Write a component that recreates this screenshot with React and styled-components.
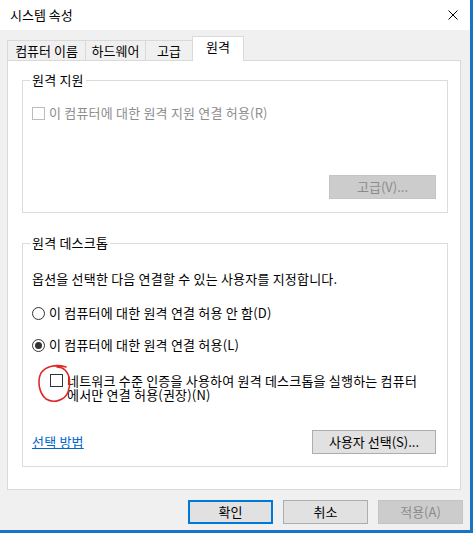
import React from "react";
import styled, { createGlobalStyle } from "styled-components";

const Global = createGlobalStyle`
  html, body { margin: 0; padding: 0; background: #f0f0f0; }
  body {
    font-family: "Noto Sans CJK KR", "Noto Sans", sans-serif;
    font-size: 13px;
    letter-spacing: 0.2px;
    color: #000;
  }
  * { box-sizing: border-box; }
`;

const Window = styled.div`
  width: 473px;
  height: 533px;
  background: #f0f0f0;
  border-right: 3px solid #1a74c6;
  border-bottom: 3px solid #1a74c6;
  display: flex;
  flex-direction: column;
`;

const TitleBar = styled.div`
  flex: none;
  height: 30px;
  background: #fff;
  display: flex;
  align-items: center;
  justify-content: space-between;
  padding: 0 12px 0 10px;
`;

const Title = styled.span`
  font-size: 13px;
  line-height: 16px;
  letter-spacing: 0;
`;

const Body = styled.div`
  flex: 1;
  display: flex;
  flex-direction: column;
  padding: 7px 9px 0 7px;
`;

const TabRow = styled.div`
  display: flex;
  align-items: flex-end;
  height: 24px;
  position: relative;
  z-index: 1;
  margin-bottom: -1px;
`;

const Tab = styled.div`
  width: ${(p) => p.$w}px;
  height: ${(p) => (p.$active ? 25 : 21)}px;
  margin-left: ${(p) => (p.$first ? 0 : -1)}px;
  background: ${(p) => (p.$active ? "#fff" : "#f0f0f0")};
  border: 1px solid #d9d9d9;
  border-bottom: ${(p) => (p.$active ? "none" : "1px solid #d9d9d9")};
  display: flex;
  justify-content: center;
  align-items: flex-start;
  padding-top: 2px;
  font-size: 13px;
  line-height: 16px;
  letter-spacing: 0;
  white-space: nowrap;
`;

const Panel = styled.div`
  flex: none;
  height: 430px;
  background: #fff;
  border: 1px solid #d9d9d9;
  padding: 11px 12px 0 14px;
  display: flex;
  flex-direction: column;
`;

const Group = styled.fieldset`
  margin: ${(p) => p.$mt || 0}px 0 0 0;
  padding: 0 11px ${(p) => p.$pb}px 7px;
  border: 1px solid #dcdcdc;
  display: flex;
  flex-direction: column;
  min-width: 0;
`;

const Legend = styled.legend`
  padding: 0 2px;
  font-size: 13px;
  line-height: 16px;
`;

const Row = styled.div`
  display: flex;
  align-items: center;
  gap: 4px;
  margin-top: ${(p) => p.$mt}px;
  padding-left: 2px;
  height: 16px;
  font-size: 13px;
  line-height: 16px;
  color: ${(p) => (p.$disabled ? "#8d8d8d" : "#000")};
  white-space: nowrap;
`;

const Desc = styled.div`
  margin-top: ${(p) => p.$mt}px;
  padding-left: 2px;
  font-size: 13px;
  line-height: 16px;
  white-space: nowrap;
`;

const Box = styled.span`
  flex: none;
  width: 13px;
  height: 13px;
  border: 1px solid ${(p) => (p.$disabled ? "#bcbcbc" : "#333")};
  background: #fff;
`;

const Radio = styled.span`
  flex: none;
  width: 13px;
  height: 13px;
  border-radius: 50%;
  border: 1px solid #333;
  display: flex;
  align-items: center;
  justify-content: center;
  &::after {
    content: "";
    width: 7px;
    height: 7px;
    border-radius: 50%;
    background: ${(p) => (p.$checked ? "#333" : "transparent")};
  }
`;

const NestedOption = styled.div`
  display: flex;
  align-items: flex-start;
  gap: 4px;
  margin-top: 21px;
  padding-left: 20px;
`;

const MarkWrap = styled.span`
  position: relative;
  flex: none;
  width: 13px;
  height: 13px;
  display: flex;
`;

const Scribble = styled.svg`
  position: absolute;
  left: -14px;
  top: -10px;
  overflow: visible;
  pointer-events: none;
`;

const TwoLine = styled.div`
  font-size: 13px;
  line-height: 14px;
  white-space: nowrap;
`;

const ButtonRow = styled.div`
  display: flex;
  justify-content: ${(p) => p.$justify || "flex-end"};
  align-items: center;
  gap: 10px;
  margin-top: ${(p) => p.$mt}px;
  margin-right: ${(p) => p.$mr || 0}px;
  padding-left: ${(p) => p.$pl || 0}px;
`;

const Button = styled.button`
  width: ${(p) => p.$w}px;
  height: 24px;
  font-family: inherit;
  font-size: 13px;
  line-height: 16px;
  letter-spacing: 0;
  padding: 0;
  background: ${(p) => (p.$disabled ? "#cccccc" : "#e1e1e1")};
  color: ${(p) => (p.$disabled ? "#8b8b8b" : "#000")};
  border: ${(p) =>
    p.$primary ? "2px solid #0078d7" : p.$disabled ? "1px solid #c4c4c4" : "1px solid #adadad"};
  cursor: default;
`;

const Link = styled.a`
  color: #0066cc;
  text-decoration: underline;
  font-size: 13px;
  line-height: 16px;
`;

const CloseIcon = () => (
  <svg width="10" height="10" viewBox="0 0 10 10">
    <path d="M0.5 0.5 L9.5 9.5 M9.5 0.5 L0.5 9.5" stroke="#000" strokeWidth="1" fill="none" />
  </svg>
);

export default function App() {
  return (
    <>
      <Global />
      <Window>
        <TitleBar>
          <Title>시스템 속성</Title>
          <CloseIcon />
        </TitleBar>
        <Body>
          <TabRow>
            <Tab $w={79} $first>컴퓨터 이름</Tab>
            <Tab $w={61}>하드웨어</Tab>
            <Tab $w={48}>고급</Tab>
            <Tab $w={52} $active>원격</Tab>
          </TabRow>
          <Panel>
            <Group $pb={13}>
              <Legend>원격 지원</Legend>
              <Row $mt={17} $disabled>
                <Box $disabled />
                이 컴퓨터에 대한 원격 지원 연결 허용(R)
              </Row>
              <ButtonRow $mt={54}>
                <Button $w={107} $disabled>고급(V)...</Button>
              </ButtonRow>
            </Group>
            <Group $mt={22} $pb={12}>
              <Legend>원격 데스크톱</Legend>
              <Desc $mt={20}>옵션을 선택한 다음 연결할 수 있는 사용자를 지정합니다.</Desc>
              <Row $mt={18}>
                <Radio />
                이 컴퓨터에 대한 원격 연결 허용 안 함(D)
              </Row>
              <Row $mt={16}>
                <Radio $checked />
                이 컴퓨터에 대한 원격 연결 허용(L)
              </Row>
              <NestedOption>
                <MarkWrap>
                  <Box />
                  <Scribble width="36" height="40" viewBox="0 0 36 40">
                    <path
                      d="M30,3 C20,0 10,2 5,9 C1,17 3,29 10,35 C18,40 29,36 32,28 C35,20 34,11 29,6 C27,4 24,3 21,3"
                      stroke="#e02828"
                      strokeWidth="1.6"
                      fill="none"
                      strokeLinecap="round"
                    />
                  </Scribble>
                </MarkWrap>
                <TwoLine>
                  네트워크 수준 인증을 사용하여 원격 데스크톱을 실행하는 컴퓨터
                  <br />
                  에서만 연결 허용(권장)(N)
                </TwoLine>
              </NestedOption>
              <ButtonRow $mt={28} $justify="space-between" $pl={2}>
                <Link>선택 방법</Link>
                <Button $w={124}>사용자 선택(S)...</Button>
              </ButtonRow>
            </Group>
          </Panel>
          <ButtonRow $mt={10} $mr={-2}>
            <Button $w={85} $primary>확인</Button>
            <Button $w={85}>취소</Button>
            <Button $w={85} $disabled>적용(A)</Button>
          </ButtonRow>
        </Body>
      </Window>
    </>
  );
}
